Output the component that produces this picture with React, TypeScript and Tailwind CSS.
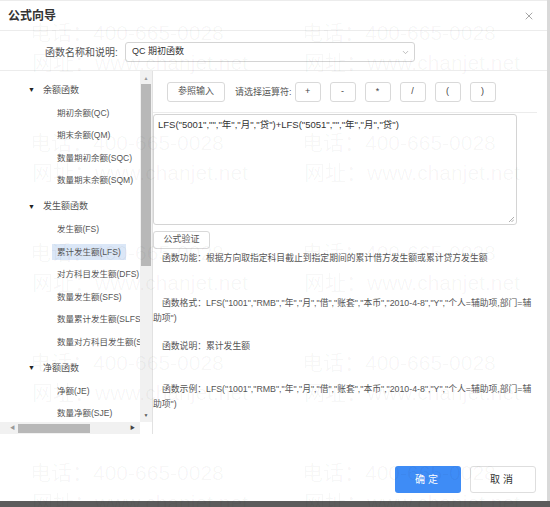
import { X, ChevronDown } from "lucide-react";

type Group = { title: string; items: string[] };

const groups: Group[] = [
  { title: "余额函数", items: ["期初余额(QC)", "期末余额(QM)", "数量期初余额(SQC)", "数量期末余额(SQM)"] },
  {
    title: "发生额函数",
    items: [
      "发生额(FS)",
      "累计发生额(LFS)",
      "对方科目发生额(DFS)",
      "数量发生额(SFS)",
      "数量累计发生额(SLFS)",
      "数量对方科目发生额(SDFS)",
    ],
  },
  { title: "净额函数", items: ["净额(JE)", "数量净额(SJE)"] },
];

const operators = ["+", "-", "*", "/", "(", ")"];

const marks = [30, 140, 250, 360, 470];

function Watermark() {
  return (
    <div className="pointer-events-none absolute inset-0 text-[21px] text-black/[0.04] whitespace-nowrap">
      {marks.map((y) => (
        <div key={y}>
          <span className="absolute left-[30px]" style={{ top: y - 14 }}>电话：400-665-0028</span>
          <span className="absolute left-[302px]" style={{ top: y - 14 }}>电话：400-665-0028</span>
          <span className="absolute left-[32px]" style={{ top: y + 16 }}>网址：www.chanjet.net</span>
          <span className="absolute left-[304px]" style={{ top: y + 16 }}>网址：www.chanjet.net</span>
        </div>
      ))}
    </div>
  );
}

function Tree() {
  return (
    <div className="flex-1 overflow-hidden pt-[8px] text-[8.5px] text-[#555]">
      {groups.map((g, gi) => (
        <div key={g.title} className={gi > 0 ? "mt-[4px]" : ""}>
          <div className="flex h-[22.5px] items-center pl-[28px] whitespace-nowrap">
            <span className="w-[15px] text-[7px] text-[#222]">▼</span>
            <span className="text-[9px]">{g.title}</span>
          </div>
          {g.items.map((it) => (
            <div key={it} className="flex h-[22.5px] items-center pl-[52px] whitespace-nowrap">
              <span
                className={
                  "px-[5px] leading-[16px] " + (it === "累计发生额(LFS)" ? "bg-[#dbe7f7]" : "")
                }
              >
                {it}
              </span>
            </div>
          ))}
        </div>
      ))}
    </div>
  );
}

export default function App() {
  return (
    <div className="flex h-[507px] w-[550px] flex-col overflow-hidden bg-[#d9d9d9] font-[Liberation_Sans,Noto_Sans_CJK_SC,sans-serif]">
      <div className="relative flex h-[501px] w-[547px] flex-col border-t border-[#ececec] bg-white">
        {/* header */}
        <div className="flex h-[30px] shrink-0 items-center justify-between border-b border-[#ececec] pl-[8px] pr-[12px]">
          <span className="text-[12px] font-semibold text-[#333]">公式向导</span>
          <X size={12} strokeWidth={1.5} className="text-[#888]" />
        </div>

        {/* function select */}
        <div className="flex h-[40px] shrink-0 items-center border-b border-[#ececec] pt-[3px] pl-[45px]">
          <span className="w-[80px] text-[10px] text-[#555]">函数名称和说明:</span>
          <div className="flex h-[20px] w-[290px] items-center justify-between rounded-[3px] border border-[#d4d4d4] pl-[6px] pr-[4px] text-[9px] text-[#333]">
            <span>QC 期初函数</span>
            <ChevronDown size={9} className="text-[#aaa]" />
          </div>
        </div>

        {/* body */}
        <div className="flex shrink-0">
          <div className="flex h-[363px] w-[153px] flex-col border-r border-[#e2e2e2]">
            <div className="flex flex-1 overflow-hidden">
              <Tree />
              <div className="flex w-[12px] flex-col items-center bg-[#f1f1f1]">
                <span className="mt-[3px] text-[5px] leading-[8px] text-[#999]">▲</span>
                <div className="mt-[2px] h-[182px] w-[10px] bg-[#b8b8b8]" />
                <div className="flex-1" />
                <span className="mb-[3px] text-[5px] leading-[8px] text-[#555]">▼</span>
              </div>
            </div>
            <div className="flex h-[12px]">
              <div className="flex w-[140px] items-center bg-[#f1f1f1] pl-[10px] pr-[5px]">
                <span className="text-[5px] text-[#999]">◀</span>
                <div className="ml-[3px] h-[9px] w-[72px] bg-[#b8b8b8]" />
                <div className="flex-1" />
                <span className="text-[5px] text-[#444]">▶</span>
              </div>
              <div className="flex-1 bg-white" />
            </div>
          </div>

          <div className="flex-1 pr-[10px]">
            <div className="flex h-[42px] items-start gap-[9px] border-b border-[#ececec] pt-[11px] pl-[14px] text-[9px] text-[#555]">
              <button className="h-[20px] w-[58px] rounded-[3px] border border-[#d9d9d9] bg-white text-[#555]">
                参照输入
              </button>
              <span className="mr-[-6px] ml-[1px] leading-[20px]">请选择运算符:</span>
              {operators.map((op) => (
                <button
                  key={op}
                  className="h-[20px] w-[26px] rounded-[3px] border border-[#d9d9d9] bg-white text-[9px] text-[#444]"
                >
                  {op}
                </button>
              ))}
            </div>

            <div className="relative mt-[1px] h-[111px] w-[364px] rounded-[3px] border border-[#d4d4d4] px-[4px] pt-[3px] text-[9.5px] text-[#333]">
              LFS("5001","","年","月","贷")+LFS("5051","","年","月","贷")
              <svg className="absolute right-[2px] bottom-[2px]" width="6" height="6" viewBox="0 0 6 6">
                <path d="M1 6 L6 1 M3.5 6 L6 3.5" stroke="#999" strokeWidth="0.8" />
              </svg>
            </div>

            <button className="mt-[1px] h-[18px] w-[57px] rounded-[3px] border border-[#d9d9d9] bg-white text-[9px] text-[#555]">
              公式验证
            </button>

            <div className="text-[8.8px] leading-[15px] text-[#555]">
              <p className="mt-[2px] pl-[9px] whitespace-nowrap">
                函数功能：根据方向取指定科目截止到指定期间的累计借方发生额或累计贷方发生额
              </p>
              <p className="mt-[30px] whitespace-nowrap">
                <span className="pl-[9px]">函数格式：LFS("1001","RMB","年","月","借","账套","本币","2010-4-8","Y","个人=辅助项,部门=辅</span>
                <br />
                助项")
              </p>
              <p className="mt-[13px] pl-[9px] whitespace-nowrap">函数说明：累计发生额</p>
              <p className="mt-[28px] whitespace-nowrap">
                <span className="pl-[9px]">函数示例：LFS("1001","RMB","年","月","借","账套","本币","2010-4-8","Y","个人=辅助项,部门=辅</span>
                <br />
                助项")
              </p>
            </div>
          </div>
        </div>

        {/* footer */}
        <div className="flex flex-1 items-end justify-end gap-[9px] pr-[11px] pb-[8px]">
          <button className="h-[27px] w-[66px] rounded-[3px] bg-[#3e8cf6] text-[10px] tracking-[3px] text-white">
            确定
          </button>
          <button className="h-[27px] w-[66px] rounded-[3px] border border-[#dedede] bg-white text-[10px] tracking-[3px] text-[#333]">
            取消
          </button>
        </div>

        <Watermark />
      </div>
      <div className="flex-1 bg-[#5c5c5c]" />
    </div>
  );
}
